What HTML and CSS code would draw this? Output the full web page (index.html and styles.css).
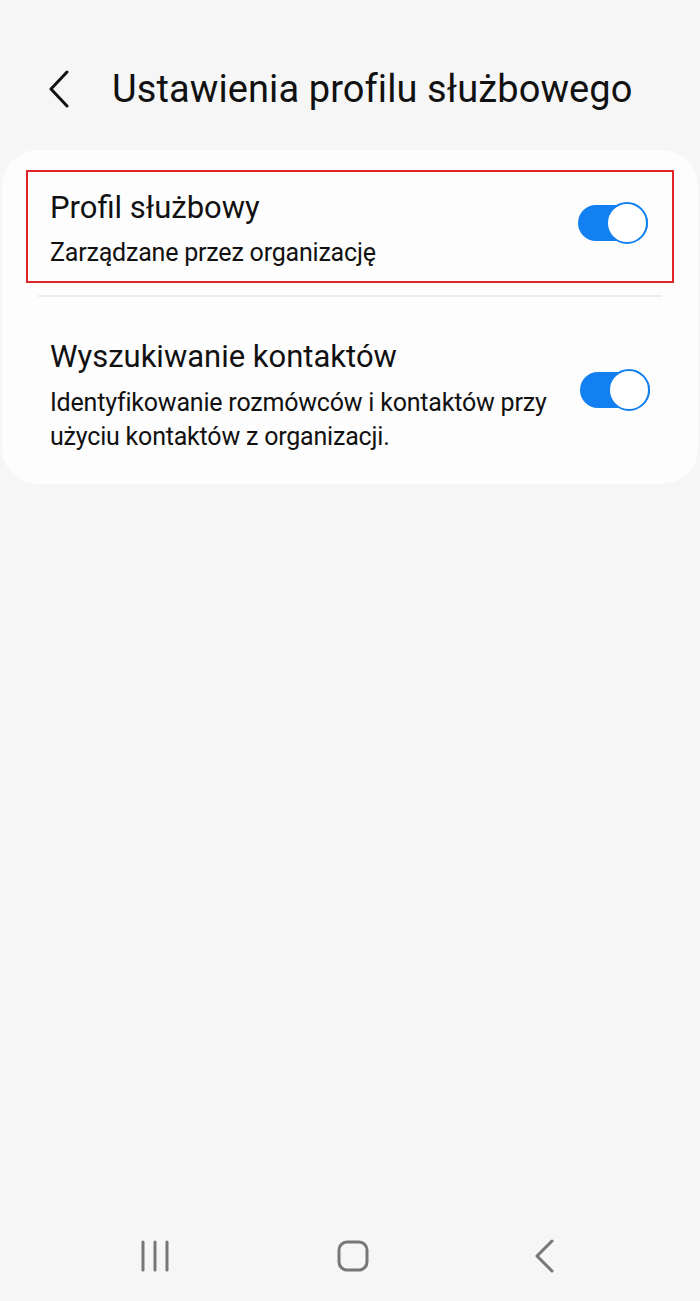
FILE: index.html
```html
<!DOCTYPE html>
<html lang="pl">
	<head>
		<meta charset="utf-8">
		<title>Ustawienia profilu służbowego</title>
		<link rel="stylesheet" href="styles.css">
	</head>
	<body>
		<div id="screen">
			<div class="header">
				<svg class="back" width="24" height="38" viewBox="0 0 24 38"><path d="M20 2 L4 19 L20 36" fill="none" stroke="#111" stroke-width="3" stroke-linecap="round" stroke-linejoin="round"/></svg>
				<h1>Ustawienia profilu służbowego</h1>
			</div>
			<div class="card">
				<div class="row highlight">
					<div class="text">
						<div class="title">Profil służbowy</div>
						<div class="sub">Zarządzane przez organizację</div>
					</div>
					<span class="switch"><span class="knob"></span></span>
				</div>
				<div class="divider"></div>
				<div class="row">
					<div class="text">
						<div class="title">Wyszukiwanie kontaktów</div>
						<div class="sub">Identyfikowanie rozmówców i kontaktów przy użyciu kontaktów z organizacji.</div>
					</div>
					<span class="switch"><span class="knob"></span></span>
				</div>
			</div>
			<div class="spacer"></div>
			<div class="navbar">
				<svg width="32" height="32" viewBox="0 0 32 32"><path d="M3 2v28M15 2v28M27 2v28" stroke="#777" stroke-width="3" stroke-linecap="round"/></svg>
				<svg width="32" height="32" viewBox="0 0 32 32"><rect x="2" y="2" width="28" height="28" rx="8" fill="none" stroke="#777" stroke-width="3"/></svg>
				<svg width="22" height="34" viewBox="0 0 22 34"><path d="M18 2 L3 17 L18 32" fill="none" stroke="#777" stroke-width="3" stroke-linecap="round" stroke-linejoin="round"/></svg>
			</div>
		</div>
	</body>
</html>
```

FILE: styles.css
```css
body, html {margin:0;padding:0;background:#f6f6f6;font-family:Roboto,"Liberation Sans",sans-serif;color:#111;}
#screen {width:700px;height:1301px;display:flex;flex-direction:column;}
.header {height:150px;display:flex;align-items:center;padding-left:47px;box-sizing:border-box;padding-top:28px;}
.back {margin-right:41px;}
h1 {margin:0;font-weight:normal;font-size:38px;letter-spacing:0.1px;color:#111;}
.card {margin:0 2px;background:#fdfdfd;border-radius:36px;padding:20px 24px 30px 24px;}
.row {display:flex;align-items:center;justify-content:space-between;padding:0 24px;}
.highlight {border:2px solid #e0262b;height:113px;box-sizing:border-box;padding:0 24px 0 22px;}
.text {display:flex;flex-direction:column;}
.title {font-size:31px;line-height:36px;}
.sub {font-size:25px;line-height:34px;max-width:500px;letter-spacing:-0.2px;}
.highlight .sub {margin-top:10px;}
.highlight .text {margin-top:6px;}
.divider {height:2px;background:#ececec;margin:12px 12px 0 12px;}
.row:last-child {padding-top:42px;}
.row:last-child .sub {margin-top:11px;}
.row:last-child .switch {margin-top:-6px;}
.switch {position:relative;display:inline-block;width:70px;height:36px;border-radius:18px;background:#1380f1;flex-shrink:0;margin-bottom:8px;}
.knob {position:absolute;right:0;top:-3px;width:38px;height:38px;border-radius:50%;background:#fff;border:2px solid #1380f1;}
.spacer {flex:1;}
.navbar {height:90px;display:flex;align-items:center;justify-content:space-between;padding:0 144px 0 140px;}
```
